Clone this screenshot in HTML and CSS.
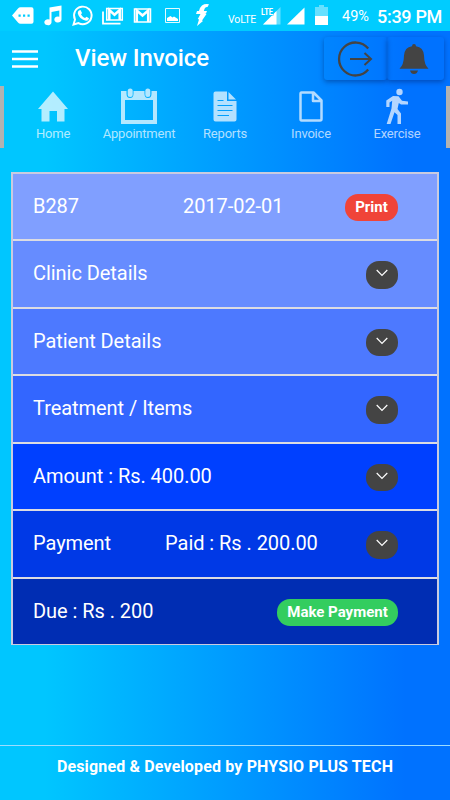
FILE: index.html
```html
<!DOCTYPE html>
<html lang="en">
<head>
<meta charset="utf-8">
<title>View Invoice</title>
<link rel="stylesheet" href="styles.css">
</head>
<body>
<div class="status">
  <svg class="status-icons" width="225" height="31" viewBox="0 0 225 31" fill="#fff">
    <path fill-rule="evenodd" d="M12 15.500L18 8.500Q19 7.300 20.500 7.300H31.500Q33.500 7.300 33.500 9.300V21.700Q33.500 23.700 31.500 23.700H20.500Q19 23.700 18 22.500ZM18.500 14.500V16.700H20.700V14.500ZM23 14.500V16.700H25.200V14.500ZM27.500 14.500V16.700H29.700V14.500Z"/>
    <path d="M49.500 7.500L61.500 5.500V19.500A3.600 3 0 1 1 59.300 16.800V10.500L51.500 12V22.500A3.600 3 0 1 1 49.500 19.500Z"/>
    <g fill="none" stroke="#fff"><path stroke-width="1.900" d="M73.500 24.500L75 19.500A8.800 8.800 0 1 1 78.500 23.100Z"/></g>
    <path d="M79 10.500L80.500 10L82 13L81 14.500Q82.500 17 85 18L86.500 16.800L89 18.200Q88.500 21 86 20.800Q79.500 19.500 77.800 13.500Q77.600 11.500 79 10.500Z"/>
    <path fill="none" stroke="#fff" stroke-width="1.800" d="M103 11.500V23.600H120.500"/>
    <path fill="none" stroke="#fff" stroke-width="1.500" d="M106.700 8.600H122.300V20H106.700Z"/>
    <path fill="none" stroke="#fff" stroke-width="2.500" d="M109.300 20V10L114.500 14.700L119.700 10V20"/>
    <path fill="none" stroke="#fff" stroke-width="1.500" d="M134.500 9H150.500V22H134.500Z"/>
    <path fill="none" stroke="#fff" stroke-width="2.500" d="M136.800 22V10.500L142.500 15.500L148.200 10.500V22"/>
    <path fill="none" stroke="#e2fbff" stroke-width="1" d="M165.500 8.500H179.500V22.500H165.500Z"/>
    <path d="M167 21V18L170.500 16L172.500 17.500L174 16.500L178 19V21Z"/>
    <path d="M202 5.500Q205 3.500 209 4.300L207.500 7Q205.300 6.700 204.700 8.500L203.800 11H207L206 13.500H204.500L206.500 14L202 20.500L203 21L197 26L199 19.500L197.800 19L200.500 14H196L197 11H199Q200 7 202 5.500Z"/>
  </svg>
  <span class="volte">VoLTE</span>
  <svg class="signal-icons" width="74" height="31" viewBox="0 0 74 31">
    <path fill="#66e0ff" d="M22.500 7V24.500H5Z"/>
    <path fill="#0cf" d="M2 6H15.500V15H2Z"/>
    <path fill="#fff" d="M18.500 11V24.500H5Z"/>
    <path fill="#0cf" d="M2 6H15.500V15.500H2Z"/>
    <text class="lte" x="3" y="15" textLength="12" lengthAdjust="spacingAndGlyphs">LTE</text>
    <path fill="#fff" d="M46.500 7.500V24.500H29Z"/>
    <path fill="#66e0ff" d="M57 7H61V5H66V7H70V16H57Z"/><path fill="#fff" d="M57 16H70V25H57Z"/>
  </svg>
  <span class="battery">49%</span>
  <span class="clock">5:39 PM</span>
</div>
<header class="header">
  <svg class="menu" width="26" height="18" viewBox="0 0 26 18"><path stroke="#fff" stroke-width="2.500" d="M0 1.400H26M0 9H26M0 16.600H26"/></svg>
  <h1 class="title"><span>View Invoice</span></h1>
  <div class="header-actions">
    <button class="action"><svg width="36" height="36" viewBox="0 0 36 36" fill="none" stroke="#444"><path stroke-width="2.300" d="M31.200 7.400A16.500 16.500 0 1 0 31.200 28.600"/><path stroke-width="2" d="M13 18H33.500M27.500 12L34 18L27.500 24"/></svg></button>
    <button class="action bell"><svg width="30" height="32" viewBox="0 0 30 32" fill="#444"><path d="M13 3.200Q13 1 15 1T17 3.200Q24.500 4.300 25 12.500Q25.200 22 29.500 25.700H.5Q4.800 22 5 12.500Q5.500 4.300 13 3.200ZM11 27.500H19Q18 31 15 31T11 27.500Z"/></svg></button>
  </div>
</header>
<nav class="tabs">
  <a class="tab"><svg width="36" height="38" viewBox="0 0 36 38" fill="currentColor"><path d="M18 5.500L33 23H29.500V35.500H22V25H14.500V35.500H6.500V23H3Z"/></svg><span class="home">Home</span></a>
  <a class="tab"><svg width="36" height="38" viewBox="0 0 36 38" fill="currentColor"><path fill-rule="evenodd" d="M0 5H5.500V7.500Q5.500 12 9 12T12.500 7.500V5H23.500V7.500Q23.500 12 27 12T30.500 7.500V5H36V38H0ZM4 14V34H32V14Z"/><rect x="6.700" y="2.500" width="5" height="8.500" rx="2.500"/><rect x="24.300" y="2.500" width="5" height="8.500" rx="2.500"/></svg><span class="appointment">Appointment</span></a>
  <a class="tab"><svg width="36" height="38" viewBox="0 0 36 38" fill="currentColor"><path d="M8.500 5.500H20V15H29.500V33.500Q29.500 35.500 27.500 35.500H8.500Q6.500 35.500 6.500 33.500V7.500Q6.500 5.500 8.500 5.500ZM21.500 6L29 13.500H21.500Z"/><path stroke="#009ffd" stroke-width="1.200" d="M10.500 14.500H16.500M10.500 19.500H25.500M10.500 24.500H25.500M10.500 29.500H22"/></svg><span class="reports">Reports</span></a>
  <a class="tab"><svg width="36" height="38" viewBox="0 0 36 38" fill="none" stroke="currentColor" stroke-width="2.500" stroke-linejoin="round"><path d="M8.500 6.500H20.500L28.500 14.500V33Q28.500 34.500 27 34.500H8.500Q7.500 34.500 7.500 33V8Q7.500 6.500 8.500 6.500ZM20 7V15H28"/></svg><span class="invoice">Invoice</span></a>
  <a class="tab"><svg width="36" height="38" viewBox="0 0 36 38" fill="currentColor"><circle cx="20.500" cy="6" r="3.200"/><path d="M14 10L19.500 10.200L23 14.800L29 15.500V18.500H22L19.800 17L18.500 23L22 27.500V38H18.500V29L15.500 26.300L11.500 38H7.700L12.500 22.500L13.200 14.800L10.500 16.500V21H7.300V14.500Z"/></svg><span class="exercise">Exercise</span></a>
</nav>
<main class="list">
  <div class="row id"><span class="label b287">B287</span><span class="date">2017-02-01</span><button class="pill print"><span>Print</span></button></div>
  <div class="row clinic"><span class="label">Clinic Details</span><button class="toggle"><svg width="12" height="8" viewBox="0 0 12 8"><path d="M.7 1L6 6.300L11.300 1"/></svg></button></div>
  <div class="row patient"><span class="label">Patient Details</span><button class="toggle"><svg width="12" height="8" viewBox="0 0 12 8"><path d="M.7 1L6 6.300L11.300 1"/></svg></button></div>
  <div class="row items"><span class="label">Treatment / Items</span><button class="toggle"><svg width="12" height="8" viewBox="0 0 12 8"><path d="M.7 1L6 6.300L11.300 1"/></svg></button></div>
  <div class="row amount"><span class="label">Amount : Rs. 400.00</span><button class="toggle"><svg width="12" height="8" viewBox="0 0 12 8"><path d="M.7 1L6 6.300L11.300 1"/></svg></button></div>
  <div class="row payment"><span class="label">Payment</span><span class="paid">Paid : Rs . 200.00</span><button class="toggle"><svg width="12" height="8" viewBox="0 0 12 8"><path d="M.7 1L6 6.300L11.300 1"/></svg></button></div>
  <div class="row due"><span class="label">Due : Rs . 200</span><button class="pill pay"><span>Make Payment</span></button></div>
</main>
<footer class="footer"><span>Designed &amp; Developed by PHYSIO PLUS TECH</span></footer>
</body>
</html>
```
FILE: styles.css
```css
* { box-sizing: border-box; }
body {
  margin: 0;
  height: 800px;
  display: flex;
  flex-direction: column;
  overflow: hidden;
  font-family: Roboto, sans-serif;
  color: #fff;
  background: linear-gradient(90deg, #00c6ff 10%, #0072ff 90%);
}
button { border: 0; padding: 0; font: inherit; color: inherit; }
svg { display: block; flex: none; }
.status {
  height: 31px;
  flex: none;
  display: flex;
  background: #0cf;
  white-space: nowrap;
}
.volte { width: 32px; margin-left: 3px; font-size: 10.5px; line-height: 39px; letter-spacing: -.15px; }
.signal-icons { margin-left: -2px; }
.lte { font: bold 9.5px Roboto, sans-serif; fill: #fff; }
.battery { width: 35px; margin-left: 10px; font-size: 14.5px; line-height: 33px; }
.clock { font-size: 18px; font-weight: 500; line-height: 33px; letter-spacing: -.3px; }
.header {
  height: 55px;
  flex: none;
  display: flex;
  padding-left: 12px;
}
.menu { margin-top: 19px; }
.title { margin: 0 0 0 37px; font-size: 24px; font-weight: 500; line-height: 54px; letter-spacing: -.1px; white-space: nowrap; }
.header-actions { display: flex; margin: 6px 6px 0 auto; height: 43px; }
.action {
  width: 63px;
  display: flex;
  align-items: center;
  justify-content: center;
  background: transparent;
  border-radius: 3px;
  box-shadow: 0 2px 5px rgba(0, 20, 80, .4);
}
.action svg { margin-left: -2px; }
.action.bell { width: 57px; }
.action.bell svg { margin-left: -3px; }
.tabs {
  height: 62px;
  flex: none;
  display: flex;
  padding: 0 6px;
  border-left: 4px solid #b2b2b2;
  border-right: 4px solid #b2b2b2;
  color: rgba(255, 255, 255, .7);
}
.tab {
  width: 86px;
  display: flex;
  flex-direction: column;
  align-items: center;
  font-size: 13px;
  line-height: 19px;
  letter-spacing: -.2px;
}
.list {
  margin: 24px 11px 0;
  border: 2px solid #c8cbe0;
  border-bottom-width: 1px;
  flex: none;
  display: flex;
  flex-direction: column;
  font-size: 20px;
}
.row {
  height: 67.5px;
  display: flex;
  align-items: center;
  padding: 0 39px 0 20px;
  line-height: 24px;
  letter-spacing: -.05px;
  white-space: nowrap;
}
.row:first-child { height: 65px; }
.row + .row { border-top: 2px solid #dcdce2; }
.label, .date, .paid { margin-top: -1px; }
.row button { margin-left: auto; margin-top: 2px; }
.id { background: #809fff; }
.clinic { background: #668cff; }
.patient { background: #4d79ff; }
.items { background: #36f; }
.amount { background: #0040ff; }
.payment { background: #0039e6; }
.due { background: #002db3; }
.b287 { width: 150px; }
.paid { margin-left: 54px; }
.pill {
  height: 27.5px;
  border-radius: 13px;
  font-size: 15px;
  font-weight: 700;
  line-height: 27px;
}
.print { width: 53px; background: #f04438; }
.pay { width: 121px; background: #33cd5f; }
.toggle {
  width: 32px;
  height: 27.5px;
  display: flex;
  justify-content: center;
  padding-top: 8px;
  border-radius: 13px;
  background: #444;
}
.toggle path { fill: none; stroke: #fff; stroke-width: 1.200; }
.footer {
  margin-top: auto;
  height: 55px;
  border-top: 1.500px solid #9cdcff;
  text-align: center;
  font-size: 16px;
  font-weight: 700;
  line-height: 42px;
  letter-spacing: .15px;
  white-space: nowrap;
}
```
